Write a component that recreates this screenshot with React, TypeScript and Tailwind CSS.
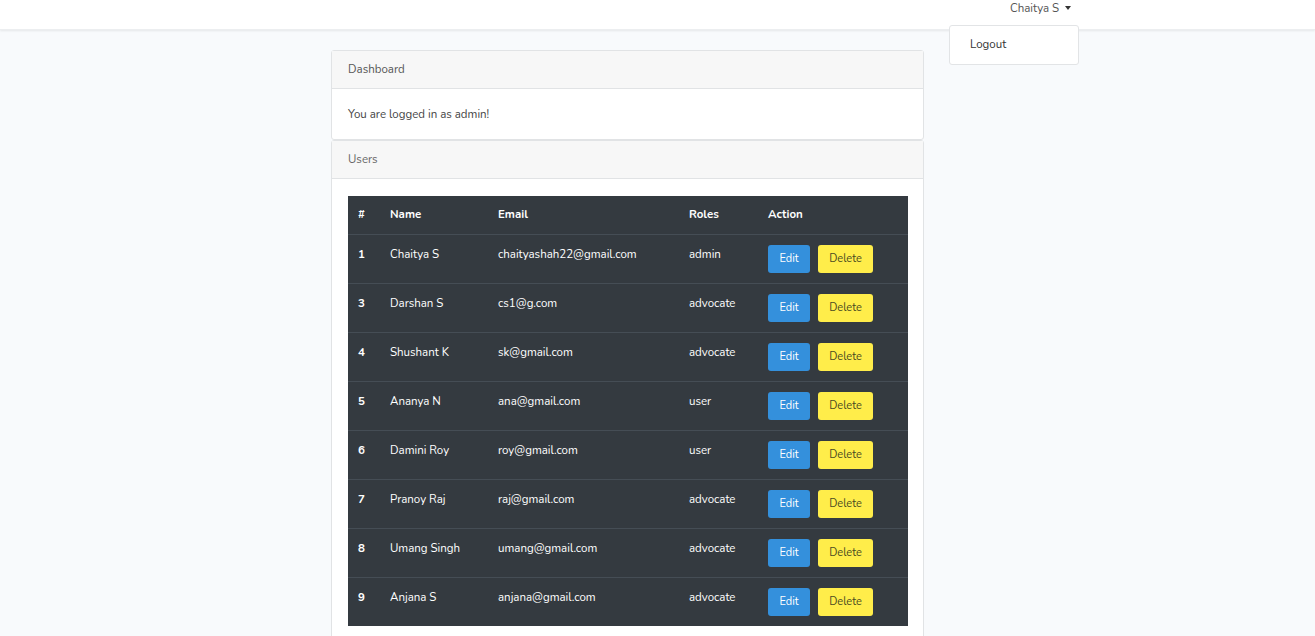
import React from "react";

const users = [
  { id: 1, name: "Chaitya S", email: "chaityashah22@gmail.com", role: "admin" },
  { id: 3, name: "Darshan S", email: "cs1@g.com", role: "advocate" },
  { id: 4, name: "Shushant K", email: "sk@gmail.com", role: "advocate" },
  { id: 5, name: "Ananya N", email: "ana@gmail.com", role: "user" },
  { id: 6, name: "Damini Roy", email: "roy@gmail.com", role: "user" },
  { id: 7, name: "Pranoy Raj", email: "raj@gmail.com", role: "advocate" },
  { id: 8, name: "Umang Singh", email: "umang@gmail.com", role: "advocate" },
  { id: 9, name: "Anjana S", email: "anjana@gmail.com", role: "advocate" },
];

export default function App() {
  return (
    <div className="min-h-[636px] bg-[#f8fafc] text-[11.5px] text-[#3d4246] font-['Nunito','Lato','Noto_Sans',sans-serif]">
      <nav className="relative h-[30px] bg-white shadow-[0_1px_2px_rgba(0,0,0,0.08)] border-b border-[#eceef0]">
        <div className="absolute left-[1010px] top-[0px] h-[16px] flex items-center gap-[6px] text-[#555]">
          <span className="leading-[16px]">Chaitya S</span>
          <span className="w-0 h-0 border-l-[3.5px] border-r-[3.5px] border-t-[4px] border-l-transparent border-r-transparent border-t-[#333]" />
        </div>
        <div className="absolute left-[949px] top-[25px] w-[130px] h-[40px] bg-white border border-[#e2e4e6] rounded-[3px] flex items-center pl-[20px] text-[#333] z-10">
          Logout
        </div>
      </nav>

      <div className="w-[593px] ml-[331px] mt-[20px]">
        <div className="border border-[#e1e3e5] rounded-[3px] bg-white">
          <div className="h-[38px] bg-[#f7f7f7] border-b border-[#e1e3e5] flex items-center px-[16px] pt-[1px] text-[#555]">
            Dashboard
          </div>
          <div className="h-[50px] flex items-center px-[16px] pt-[1px] text-[#444]">
            You are logged in as admin!
          </div>
        </div>
        <div className="border border-[#e1e3e5] rounded-t-[3px] bg-white">
          <div className="h-[38px] bg-[#f7f7f7] border-b border-[#e1e3e5] flex items-center px-[16px] pt-[1px] text-[#666]">
            Users
          </div>
          <div className="px-[16px] pt-[17px] pb-[20px]">
            <table className="w-[560px] table-fixed border-collapse bg-[#343a40] text-white">
              <colgroup>
                <col className="w-[32px]" />
                <col className="w-[108px]" />
                <col className="w-[191px]" />
                <col className="w-[79px]" />
                <col className="w-[150px]" />
              </colgroup>
              <thead>
                <tr className="border-b border-[#454d55]">
                  <th className="text-left font-bold px-[10px] h-[38px] leading-[17px]">#</th>
                  <th className="text-left font-bold px-[10px] leading-[17px]">Name</th>
                  <th className="text-left font-bold px-[10px] leading-[17px]">Email</th>
                  <th className="text-left font-bold px-[10px] leading-[17px]">Roles</th>
                  <th className="text-left font-bold px-[10px] leading-[17px]">Action</th>
                </tr>
              </thead>
              <tbody>
                {users.map((u, i) => (
                  <tr key={u.id} className={i < users.length - 1 ? "border-b border-[#454d55]" : ""}>
                    <td className="align-top px-[10px] pt-[11px] pb-[10px] leading-[17px] font-bold">{u.id}</td>
                    <td className="align-top px-[10px] pt-[11px] pb-[10px] leading-[17px]">{u.name}</td>
                    <td className="align-top px-[10px] pt-[11px] pb-[10px] leading-[17px]">{u.email}</td>
                    <td className="align-top px-[10px] pt-[11px] pb-[10px] leading-[17px]">{u.role}</td>
                    <td className="align-top px-[10px] pt-[10px] pb-[10px]">
                      <div className="flex gap-[8px]">
                        <button className="h-[28px] w-[42px] rounded-[3px] bg-[#3490dc] text-white text-[11px] pt-[2px]">Edit</button>
                        <button className="h-[28px] w-[55px] rounded-[3px] bg-[#ffed4a] text-[#4a4a22] text-[11px] pt-[2px]">Delete</button>
                      </div>
                    </td>
                  </tr>
                ))}
              </tbody>
            </table>
          </div>
        </div>
      </div>
    </div>
  );
}
